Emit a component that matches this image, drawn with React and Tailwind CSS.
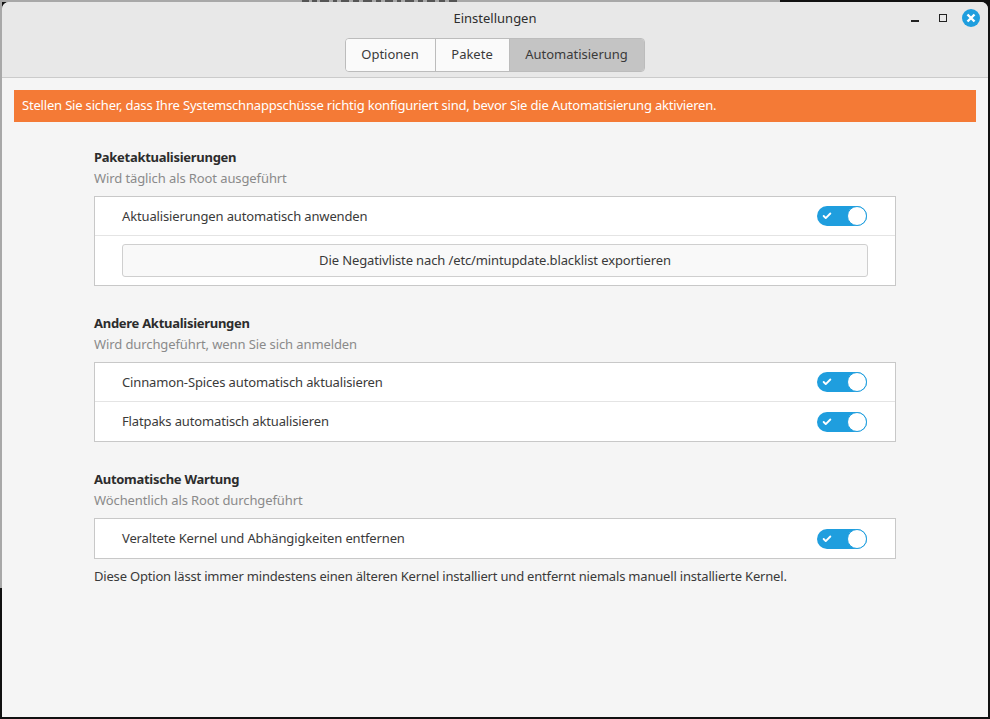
import { Check } from 'lucide-react';

const font = "font-['Noto_Sans','Open_Sans',sans-serif]";

function Toggle() {
  return (
    <div className="relative w-[50px] h-[20px] rounded-full bg-[#1f9ede]">
      <Check size={10} strokeWidth={4.5} className="absolute left-[5px] top-[5px] text-white" />
      <div className="absolute right-0 top-0 w-[20px] h-[20px] rounded-full bg-white border border-[#1f9ede]" />
    </div>
  );
}

function Row({ label, last }) {
  return (
    <div className={`h-[39px] flex items-center justify-between pl-[27px] pr-[28px] ${last ? '' : 'border-b border-[#e4e4e4]'}`}>
      <span className="pt-[1px] tracking-[-0.14px]">{label}</span>
      <Toggle />
    </div>
  );
}

function Section({ title, sub, children }) {
  return (
    <div>
      <div className="h-[21px] leading-[21px] font-bold text-[#2c2c2c] tracking-[-0.28px]">{title}</div>
      <div className="h-[21px] leading-[21px] text-[#8a8a8a] tracking-[-0.1px]">{sub}</div>
      <div className="mt-[7px] border border-[#c8c8c8] bg-white">{children}</div>
    </div>
  );
}

export default function App() {
  return (
    <div className={`relative h-[719px] w-[990px] bg-[#111111] pt-[2px] pb-[2px] px-[2px] overflow-hidden text-[13px] text-[#3a3a3a] ${font}`}>
      {/* lighter desktop showing behind the left and top edges */}
      <div className="absolute left-0 top-0 w-[2px] h-[588px] bg-[#a8a8a8]" />
      <div className="absolute left-0 top-0 w-[780px] h-[2px] bg-[#a8a8a8]">
        {/* bottoms of the title letters of the window behind */}
        <svg className="absolute left-[300px] top-0" width="160" height="2" viewBox="0 0 160 2">
          <path d="M2 1h7M12 1h5M20 1h9M33 1h4M41 1h8M53 1h6M63 1h9M76 1h5M85 1h8M97 1h4M105 1h9M118 1h5M127 1h8M139 1h6M149 1h8" stroke="#555555" strokeWidth="2" />
        </svg>
      </div>
      <div className="relative h-full rounded-t-[7px] bg-[#f5f5f5] overflow-hidden">
        <div className="relative h-[76px] bg-[#e8e8e8] border-b border-[#cbcbcb]">
          <div className="h-[33px] flex items-center justify-center text-[#2e2e2e]">Einstellungen</div>
          <div className="flex justify-center mt-[3px]">
            <div className="flex h-[34px] ml-[-1px] rounded-[4px] border border-[#bcbcbc] overflow-hidden">
              <div className="w-[90px] flex items-center justify-center bg-[#fafafa] border-r border-[#bcbcbc]">Optionen</div>
              <div className="w-[74px] flex items-center justify-center bg-[#fafafa] border-r border-[#bcbcbc]">Pakete</div>
              <div className="w-[134px] flex items-center justify-center bg-[#c4c4c4]">Automatisierung</div>
            </div>
          </div>
          <div className="absolute right-[8px] top-[7px] flex items-center">
            <div className="w-[8px] h-[2px] mt-[5px] bg-[#222222]" />
            <div className="w-[8px] h-[8px] ml-[20px] border border-[#222222]" />
            <div className="w-[18px] h-[18px] ml-[15px] rounded-full bg-[#1f9ede] flex items-center justify-center">
              <svg width="10" height="10" viewBox="0 0 10 10"><path d="M1.5 1.5l7 7M8.5 1.5l-7 7" stroke="white" strokeWidth="2.4" /></svg>
            </div>
          </div>
        </div>
        <div className="mx-[12px] mt-[12px] h-[32px] flex items-center pl-[8px] bg-[#f47a36] text-white tracking-[-0.186px]">
          Stellen Sie sicher, dass Ihre Systemschnappschüsse richtig konfiguriert sind, bevor Sie die Automatisierung aktivieren.
        </div>
        <div className="mx-[92px] mt-[25px] flex flex-col gap-[27px]">
          <Section title="Paketaktualisierungen" sub="Wird täglich als Root ausgeführt">
            <Row label="Aktualisierungen automatisch anwenden" />
            <div className="h-[49px] pt-[8px] px-[27px]">
              <div className="h-[33px] flex items-center justify-center rounded-[3px] border border-[#cfcfcf] bg-[#f9f9f9] tracking-[-0.12px]">
                Die Negativliste nach /etc/mintupdate.blacklist exportieren
              </div>
            </div>
          </Section>
          <Section title="Andere Aktualisierungen" sub="Wird durchgeführt, wenn Sie sich anmelden">
            <Row label="Cinnamon-Spices automatisch aktualisieren" />
            <Row label="Flatpaks automatisch aktualisieren" last />
          </Section>
          <div>
            <Section title="Automatische Wartung" sub="Wöchentlich als Root durchgeführt">
              <Row label="Veraltete Kernel und Abhängigkeiten entfernen" last />
            </Section>
            <div className="mt-[7px] leading-[21px] tracking-[-0.19px]">
              Diese Option lässt immer mindestens einen älteren Kernel installiert und entfernt niemals manuell installierte Kernel.
            </div>
          </div>
        </div>
      </div>
    </div>
  );
}
